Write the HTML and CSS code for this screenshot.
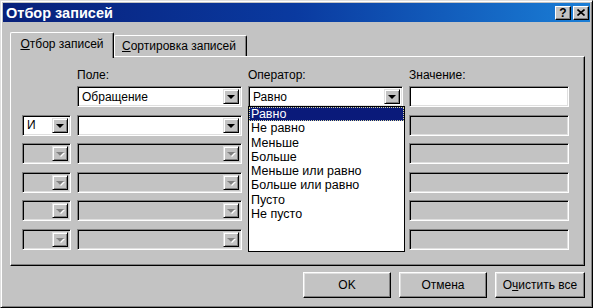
FILE: index.html
```html
<!DOCTYPE html>
<html lang="ru">
<head>
    <meta charset="UTF-8">
    <title>Отбор записей</title>
    <link rel="stylesheet" href="styles.css">
</head>
<body>
    <div class="window">
        <div class="titlebar">
            <span class="title">Отбор записей</span>
            <div class="caption-buttons">
                <div class="cap-btn help">?</div>
                <div class="cap-btn close">
                    <svg width="8" height="7" viewBox="0 0 8 7">
                        <path d="M0.5 0.5 L7.5 6.5 M7.5 0.5 L0.5 6.5" stroke="#000" stroke-width="1.6"/>
                    </svg>
                </div>
            </div>
        </div>

        <div class="tabs">
            <div class="tab active"><u>О</u>тбор записей</div>
            <div class="tab"><u>С</u>ортировка записей</div>
        </div>

        <div class="panel">
            <div class="grid labels">
                <span></span>
                <span>Поле:</span>
                <span>Оператор:</span>
                <span>Значение:</span>
            </div>

            <div class="grid rows">
                <!-- строка 1 -->
                <span></span>
                <div class="combo"><span class="val">Обращение</span><div class="drop"><i class="arrow"></i></div></div>
                <div class="combo operator">
                    <span class="val">Равно</span><div class="drop"><i class="arrow"></i></div>
                    <ul class="list">
                        <li class="selected">Равно</li>
                        <li>Не равно</li>
                        <li>Меньше</li>
                        <li>Больше</li>
                        <li>Меньше или равно</li>
                        <li>Больше или равно</li>
                        <li>Пусто</li>
                        <li>Не пусто</li>
                    </ul>
                </div>
                <div class="field"></div>

                <!-- строка 2 -->
                <div class="combo"><span class="val">И</span><div class="drop"><i class="arrow"></i></div></div>
                <div class="combo"><span class="val"></span><div class="drop"><i class="arrow"></i></div></div>
                <span></span>
                <div class="field disabled"></div>

                <!-- строки 3-6 -->
                <div class="combo disabled"><span class="val"></span><div class="drop"><i class="arrow"></i></div></div>
                <div class="combo disabled"><span class="val"></span><div class="drop"><i class="arrow"></i></div></div>
                <span></span>
                <div class="field disabled"></div>

                <div class="combo disabled"><span class="val"></span><div class="drop"><i class="arrow"></i></div></div>
                <div class="combo disabled"><span class="val"></span><div class="drop"><i class="arrow"></i></div></div>
                <span></span>
                <div class="field disabled"></div>

                <div class="combo disabled"><span class="val"></span><div class="drop"><i class="arrow"></i></div></div>
                <div class="combo disabled"><span class="val"></span><div class="drop"><i class="arrow"></i></div></div>
                <span></span>
                <div class="field disabled"></div>

                <div class="combo disabled"><span class="val"></span><div class="drop"><i class="arrow"></i></div></div>
                <div class="combo disabled"><span class="val"></span><div class="drop"><i class="arrow"></i></div></div>
                <span></span>
                <div class="field disabled"></div>
            </div>
        </div>

        <div class="buttons">
            <div class="btn">OK</div>
            <div class="btn">Отмена</div>
            <div class="btn">О<u>ч</u>истить все</div>
        </div>
    </div>
</body>
</html>
```

FILE: styles.css
```css
body {
    margin: 0;
    font-family: "Liberation Sans", Arial, sans-serif;
    font-size: 12px;
    background-color: #c0c0c0;
}
.window {
    width: 593px;
    height: 308px;
    box-sizing: border-box;
    padding: 3px;
    background-color: #c3c3c3;
    border: 1px solid;
    border-color: #dfdfdf #000 #000 #dfdfdf;
    box-shadow: inset 1px 1px #fff, inset -1px -1px #808080;
    display: flex;
    flex-direction: column;
}
.titlebar {
    height: 19px;
    margin: -1px -1px 0 -1px;
    background: linear-gradient(to right, #08207a, #0a3aa0 50%, #1a7ed6);
    display: flex;
    align-items: center;
    justify-content: space-between;
    padding: 0 1px 0 3px;
}
.title {
    color: #fff;
    font-weight: bold;
    font-size: 14.5px;
}
.caption-buttons {
    display: flex;
    gap: 2px;
}
.cap-btn {
    width: 16px;
    height: 14px;
    box-sizing: border-box;
    background-color: #c3c3c3;
    border: 1px solid;
    border-color: #fff #000 #000 #fff;
    box-shadow: inset -1px -1px #808080;
    display: flex;
    align-items: center;
    justify-content: center;
    font-weight: bold;
    font-size: 12px;
    line-height: 1;
}
.tabs {
    display: flex;
    align-items: flex-end;
    height: 24px;
    margin: 10px 0 0 6px;
}
.tab {
    height: 21px;
    box-sizing: border-box;
    padding: 0 7px;
    border: 1px solid;
    border-bottom: none;
    border-color: #fff #000 #000 #fff;
    box-shadow: inset -1px 0 #808080;
    border-radius: 2px 2px 0 0;
    display: flex;
    align-items: center;
    background-color: #c3c3c3;
}
.tab.active {
    height: 26px;
    width: 104px;
    margin-bottom: -2px;
    justify-content: center;
    position: relative;
    z-index: 1;
    padding-bottom: 3px;
}
.tab + .tab {
    width: 133px;
    padding-left: 7px;
}
.panel {
    width: 575px;
    height: 210px;
    box-sizing: border-box;
    margin-left: 6px;
    border: 1px solid;
    border-color: #fff #000 #000 #fff;
    box-shadow: inset -1px -1px #808080;
    padding: 11px 0 0 11px;
}
.grid {
    display: grid;
    grid-template-columns: 49px 165px 155px 160px;
    column-gap: 6px;
}
.labels {
    height: 14px;
    margin-bottom: 4px;
    line-height: 14px;
}
.rows {
    grid-auto-rows: 21px;
    row-gap: 7.6px;
}
.combo, .field {
    position: relative;
    box-sizing: border-box;
    border: 1px solid;
    border-color: #808080 #fff #fff #808080;
    box-shadow: inset 1px 1px #000, inset -1px -1px #dfdfdf;
    background-color: #fff;
    display: flex;
    align-items: center;
    padding: 2px;
}
.combo.disabled, .field.disabled {
    background-color: #c3c3c3;
}
.val {
    flex: 1;
    padding-left: 2px;
    white-space: nowrap;
}
.drop {
    width: 16px;
    height: 100%;
    box-sizing: border-box;
    background-color: #c3c3c3;
    border: 1px solid;
    border-color: #dfdfdf #000 #000 #dfdfdf;
    box-shadow: inset 1px 1px #fff, inset -1px -1px #808080;
    display: flex;
    align-items: center;
    justify-content: center;
}
.arrow {
    width: 0;
    height: 0;
    border-left: 4px solid transparent;
    border-right: 4px solid transparent;
    border-top: 4px solid #000;
    margin-top: 1px;
}
.disabled .arrow {
    border-top-color: #808080;
    filter: drop-shadow(1px 1px 0 #fff);
}
.list {
    position: absolute;
    top: 100%;
    left: -1px;
    width: 157px;
    height: 146px;
    box-sizing: border-box;
    margin: 0;
    padding: 0;
    list-style: none;
    background-color: #fff;
    border: 1px solid #000;
    z-index: 2;
}
.list li {
    height: 14.3px;
    line-height: 14.3px;
    padding-left: 2px;
    box-sizing: border-box;
    font-size: 12.5px;
}
.list li.selected {
    background-color: #0a1a7a;
    color: #fff;
    outline: 1px dotted #d8d8a0;
    outline-offset: -1px;
}
.buttons {
    display: flex;
    justify-content: flex-end;
    gap: 8px;
    margin-top: 6px;
    padding-right: 4px;
}
.btn {
    width: 88px;
    height: 26px;
    box-sizing: border-box;
    border: 1px solid;
    border-color: #fff #000 #000 #fff;
    box-shadow: inset -1px -1px #808080, inset 1px 1px #dfdfdf;
    display: flex;
    align-items: center;
    justify-content: center;
}
.btn:last-child {
    width: 90px;
}
```
